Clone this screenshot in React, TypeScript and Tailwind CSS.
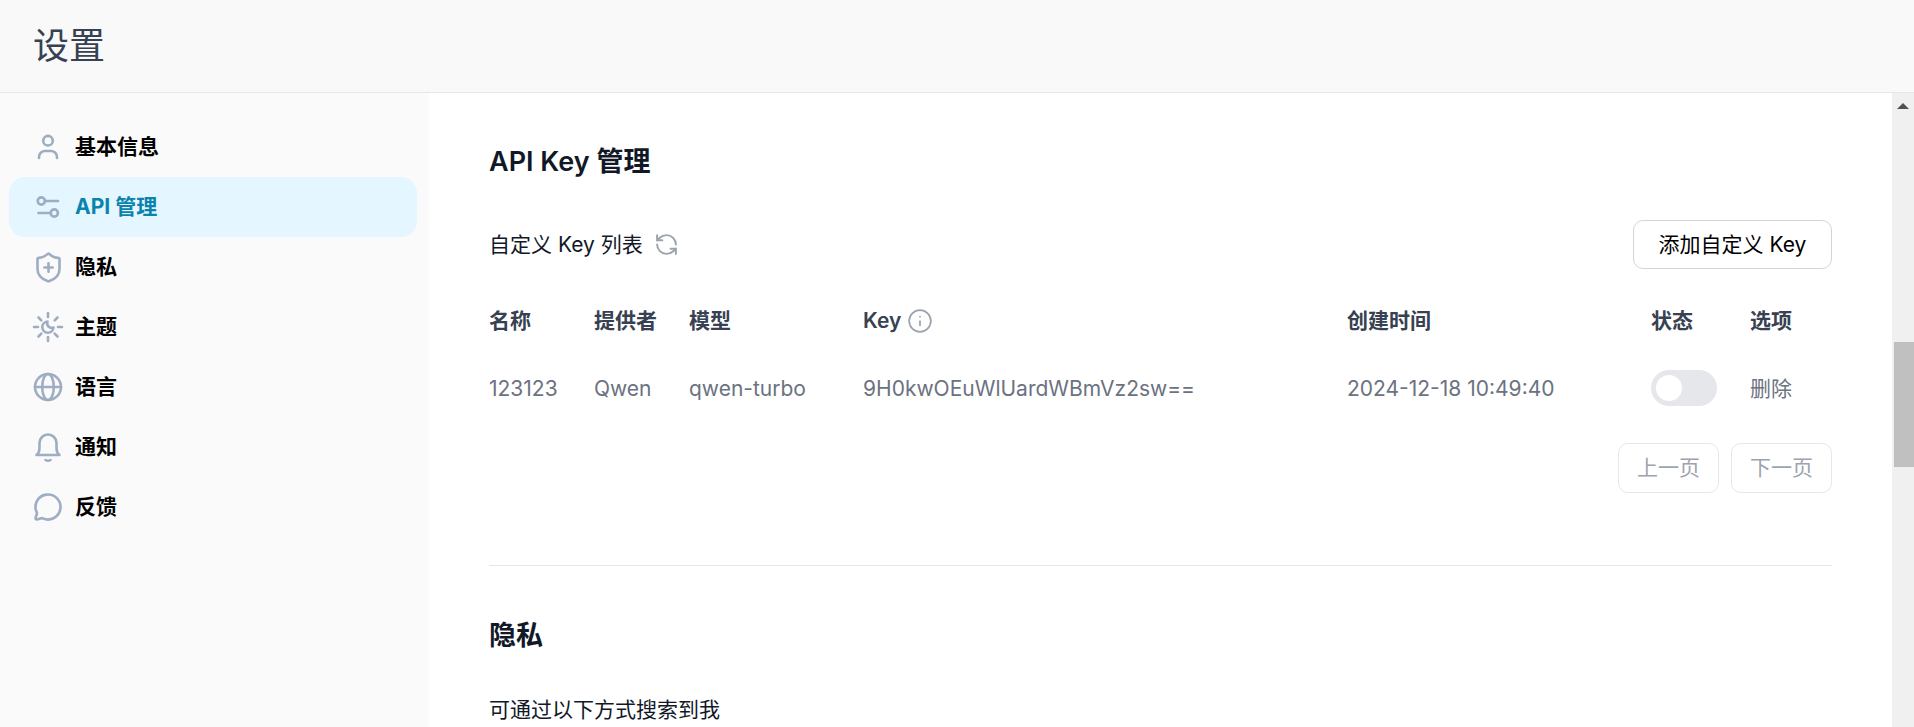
import React from 'react';
import { Info, MessageCircle, RefreshCcw, ShieldPlus } from 'lucide-react';

const iconProps = {
  width: 34,
  height: 34,
  viewBox: '0 0 34 34',
  fill: 'none',
  stroke: 'currentColor',
  strokeWidth: 2.6,
  strokeLinecap: 'round' as const,
  strokeLinejoin: 'round' as const,
};

const PersonIcon = () => (
  <svg {...iconProps}>
    <circle cx="17" cy="10.7" r="4.8" />
    <path d="M8 28v-1a6 6 0 0 1 6-6h6a6 6 0 0 1 6 6v1" />
  </svg>
);

const SlidersIcon = () => (
  <svg {...iconProps}>
    <circle cx="10.3" cy="11" r="3.6" />
    <path d="M14 11h13" />
    <circle cx="23.3" cy="23" r="3.6" />
    <path d="M7.5 23h12" />
  </svg>
);

const ShieldIcon = () => (
  <ShieldPlus size={33} strokeWidth={1.9} />
);

const SunMoonIcon = () => (
  <svg {...iconProps}>
    <path d="M17 3v4M17 27v4M3 17h4M27 17h4M7.5 7.5l2.8 2.8M26.5 7.5l-2.8 2.8M7.5 26.5l2.8-2.8M26.5 26.5l-2.8-2.8" />
    <path d="M22.5 17.5a5.6 5.6 0 1 1-6-6a4.6 4.6 0 0 0 6 6z" />
  </svg>
);

const GlobeIcon = () => (
  <svg {...iconProps}>
    <circle cx="17" cy="17" r="13" />
    <ellipse cx="17" cy="17" rx="5.8" ry="13" />
    <path d="M4 17h26" />
  </svg>
);

const BellIcon = () => (
  <svg {...iconProps}>
    <path d="M5.5 25C7.5 23.5 8.5 21.5 8.5 18v-5a8.5 8.5 0 0 1 17 0v5c0 3.5 1 5.5 3 7z" />
    <path d="M14.5 30q2.5 1.5 5 0" />
  </svg>
);

const ChatIcon = () => (
  <MessageCircle size={30} strokeWidth={2.1} />
);

const navItems = [
  { label: '基本信息', icon: PersonIcon },
  { label: 'API 管理', icon: SlidersIcon, active: true },
  { label: '隐私', icon: ShieldIcon },
  { label: '主题', icon: SunMoonIcon },
  { label: '语言', icon: GlobeIcon },
  { label: '通知', icon: BellIcon },
  { label: '反馈', icon: ChatIcon },
];

const gridCols = 'grid grid-cols-[105px_95px_174px_484px_304px_99px_1fr] items-center';

const App: React.FC = () => {
  return (
    <div className="h-[727px] w-full overflow-hidden flex flex-col bg-white font-['Inter','Noto_Sans_CJK_SC',sans-serif] text-[21px]">
      <header className="h-[93px] shrink-0 flex items-center px-[33px] bg-[#f9f9f9] border-b border-[#e5e7eb]">
        <h1 className="text-[36px] font-normal text-[#374151]">设置</h1>
      </header>

      <div className="flex flex-1 min-h-0">
        <aside className="w-[429px] shrink-0 bg-[#fafafa] pt-[24px] px-[9px]">
          <nav className="flex flex-col">
            {navItems.map((item) => {
              const Icon = item.icon;
              return (
                <div
                  key={item.label}
                  className={`h-[60px] w-[408px] flex items-center gap-[10px] pl-[22px] rounded-[16px] font-bold ${
                    item.active ? 'bg-[#e4f6ff] text-[#0a84ab]' : 'text-black'
                  }`}
                >
                  <span className="w-[34px] h-[34px] flex items-center justify-center text-[#9fadc3]">
                    <Icon />
                  </span>
                  <span>{item.label}</span>
                </div>
              );
            })}
          </nav>
        </aside>

        <main className="flex-1 min-w-0 pl-[60px] pr-[60px]">
          <h2 className="text-[27px] font-semibold text-[#111827] mt-[52px] leading-[34px]">
            API Key <span className="font-bold">管理</span>
          </h2>

          <div className="flex items-center justify-between mt-[41px] h-[49px]">
            <div className="flex items-center gap-[11px] text-[#111827]">
              <span>自定义 Key 列表</span>
              <RefreshCcw size={25} strokeWidth={1.9} className="text-[#9ca3af]" />
            </div>
            <button className="h-[49px] w-[199px] rounded-[10px] border border-[#d1d5db] bg-white text-black">
              添加自定义 Key
            </button>
          </div>

          <div className={`${gridCols} mt-[27px] h-[50px] font-bold text-[#374151]`}>
            <div>名称</div>
            <div>提供者</div>
            <div>模型</div>
            <div className="flex items-center gap-[6px] font-semibold">
              Key <Info size={26} strokeWidth={1.6} className="text-[#9ca3af]" />
            </div>
            <div>创建时间</div>
            <div>状态</div>
            <div>选项</div>
          </div>

          <div className={`${gridCols} mt-[18px] h-[50px] text-[#6b7280]`}>
            <div>123123</div>
            <div>Qwen</div>
            <div>qwen-turbo</div>
            <div>9H0kwOEuWlUardWBmVz2sw==</div>
            <div>2024-12-18 10:49:40</div>
            <div className="pb-[2px]">
              <div className="h-[36px] w-[66px] rounded-full bg-[#e5e7eb] flex items-center pl-[5px]">
                <div className="h-[26px] w-[26px] rounded-full bg-white" />
              </div>
            </div>
            <div>删除</div>
          </div>

          <div className="flex justify-end gap-[12px] mt-[29px]">
            <button className="h-[50px] w-[101px] rounded-[10px] border border-[#e5e7eb] bg-white text-[#9ca3af]">上一页</button>
            <button className="h-[50px] w-[101px] rounded-[10px] border border-[#e5e7eb] bg-white text-[#9ca3af]">下一页</button>
          </div>

          <div className="mt-[72px] border-t border-[#e5e7eb]" />

          <h2 className="text-[27px] font-bold text-[#111827] mt-[53px] leading-[34px]">隐私</h2>
          <p className="mt-[42px] leading-[30px] text-[#111827]">可通过以下方式搜索到我</p>
        </main>

        {/* scrollbar */}
        <div className="w-[22px] shrink-0 bg-[#f0f0f0] relative">
          <div className="absolute left-[5px] top-[10px] w-0 h-0 border-l-[6px] border-r-[6px] border-b-[6px] border-l-transparent border-r-transparent border-b-[#505050]" />
          <div className="absolute left-[2px] right-0 top-[249px] h-[125px] bg-[#c0c0c0]" />
        </div>
      </div>
    </div>
  );
};

export default App;
